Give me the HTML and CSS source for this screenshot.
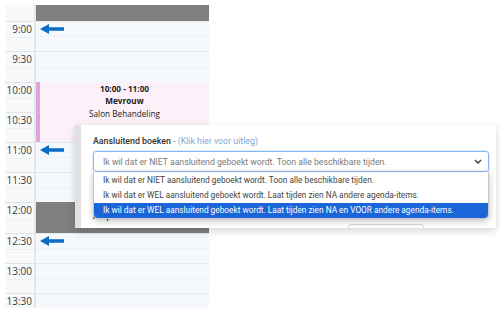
FILE: index.html
```html
<!DOCTYPE html>
<html lang="nl">
<head>
    <meta charset="UTF-8">
    <title>Agenda - Aansluitend boeken</title>
    <link rel="stylesheet" href="styles.css">
</head>
<body>
    <div class="calendar">
        <!-- Time labels -->
        <div class="labels">
            <div class="corner"></div>
            <div class="half">9:00</div>
            <div class="half">9:30</div>
            <div class="half">10:00</div>
            <div class="half">10:30</div>
            <div class="half">11:00</div>
            <div class="half">11:30</div>
            <div class="half">12:00</div>
            <div class="half">12:30</div>
            <div class="half">13:00</div>
            <div class="half last">13:30</div>
        </div>

        <!-- Day column -->
        <div class="day">
            <div class="day-head"></div>
            <div class="slots">
                <div class="slot"></div><div class="slot"></div>
                <div class="slot"></div><div class="slot"></div>
                <div class="slot"></div><div class="slot"></div>
                <div class="slot"></div><div class="slot"></div>
                <div class="slot"></div><div class="slot"></div>
                <div class="slot"></div><div class="slot"></div>
                <div class="slot"></div><div class="slot"></div>
                <div class="slot"></div><div class="slot"></div>
                <div class="slot"></div><div class="slot"></div>
                <div class="slot"></div>

                <div class="event">
                    <b>10:00 - 11:00</b>
                    <b>Mevrouw</b>
                    <span>Salon Behandeling</span>
                </div>
                <div class="blocked"></div>

                <svg class="arrow at-900" width="24" height="10" viewBox="0 0 24 10"><polygon points="0,5 9,0 9,3.3 24,3.3 24,6.7 9,6.7 9,10" /></svg>
                <svg class="arrow at-1100" width="24" height="10" viewBox="0 0 24 10"><polygon points="0,5 9,0 9,3.3 24,3.3 24,6.7 9,6.7 9,10" /></svg>
                <svg class="arrow at-1230" width="24" height="10" viewBox="0 0 24 10"><polygon points="0,5 9,0 9,3.3 24,3.3 24,6.7 9,6.7 9,10" /></svg>
            </div>
        </div>
    </div>

    <!-- Popup with booking option -->
    <div class="popup">
        <div class="popup-inner">
            <div class="field-title">
                <strong>Aansluitend boeken</strong> <span class="dash">-</span> <span class="link">(Klik hier voor uitleg)</span>
            </div>
            <div class="select-wrap">
                <div class="select">
                    <span>Ik wil dat er NIET aansluitend geboekt wordt. Toon alle beschikbare tijden.</span>
                    <svg class="chevron" width="8" height="5" viewBox="0 0 8 5"><polyline points="1,1 4,4 7,1" /></svg>
                </div>
                <ul class="options">
                    <li>Ik wil dat er NIET aansluitend geboekt wordt. Toon alle beschikbare tijden.</li>
                    <li>Ik wil dat er WEL aansluitend geboekt wordt. Laat tijden zien NA andere agenda-items.</li>
                    <li class="active">Ik wil dat er WEL aansluitend geboekt wordt. Laat tijden zien NA en VOOR andere agenda-items.</li>
                </ul>
            </div>
            <div class="next-row">
                <strong>Afspraak annuleren door klanten</strong>
                <span class="ghost-btn"></span>
            </div>
        </div>
    </div>
</body>
</html>
```

FILE: styles.css
```css
body {
    margin: 0;
    background-color: #ffffff;
    font-family: "Open Sans", sans-serif;
    color: #333333;
}
.calendar {
    display: flex;
    margin: 5px 0 0 5px;
    height: 303px;
    overflow: hidden;
}
.labels {
    width: 29px;
    background-color: #f8f9fa;
    border-right: 2px solid #e4e6e8;
}
.corner {
    height: 16.3px;
}
.half {
    height: 30.2px;
    box-sizing: border-box;
    border-top: 1px solid #e2e4e6;
    font-size: 10px;
    line-height: 14px;
    text-align: right;
    padding-right: 2px;
    color: #3a3a3a;
    background-image: linear-gradient(#eceef0, #eceef0);
    background-size: 100% 1px;
    background-position: 0 15.1px;
    background-repeat: no-repeat;
}
.day {
    width: 173px;
}
.day-head {
    height: 16.3px;
    background-color: #7f7f7f;
}
.slots {
    position: relative;
    background-color: #f5f9fe;
}
.slot {
    height: 15.1px;
    box-sizing: border-box;
    border-top: 1px solid #e6e9ee;
}
.slot:nth-child(even) {
    border-top-color: #eef1f5;
}
.event {
    position: absolute;
    left: 0;
    right: 0;
    top: 60.4px;
    height: 60.4px;
    background-color: #fcf1f9;
    border-left: 4px solid #e2a2dc;
    display: flex;
    flex-direction: column;
    align-items: center;
    padding-top: 1px;
    box-sizing: border-box;
    font-size: 8.2px;
    line-height: 12.6px;
    color: #222222;
}
.blocked {
    position: absolute;
    left: 0;
    right: 0;
    top: 181.2px;
    height: 30.2px;
    background-color: #7f7f7f;
}
.arrow {
    position: absolute;
    left: 4px;
    fill: #0a6cc4;
}
.at-900 { top: 3px; }
.at-1100 { top: 124px; }
.at-1230 { top: 215px; }

.popup {
    position: absolute;
    left: 75px;
    top: 125px;
    width: 415px;
    height: 103px;
    background-color: #ffffff;
    border-left: 6px solid #e0e0e0;
    box-shadow: 0 3px 8px rgba(0, 0, 0, 0.16);
    overflow: hidden;
    font-family: Roboto, "Noto Sans", sans-serif;
}
.popup-inner {
    padding: 10px 7px 0 12px;
}
.field-title {
    font-size: 8.8px;
    line-height: 12px;
    color: #333333;
}
.field-title strong {
    font-weight: 500;
}
.dash {
    color: #777777;
}
.link {
    color: #7ba8dc;
}
.select-wrap {
    position: relative;
    margin-top: 4px;
}
.select {
    display: flex;
    align-items: center;
    justify-content: space-between;
    height: 21px;
    box-sizing: border-box;
    border: 1px solid #86b7f0;
    border-radius: 3px;
    padding: 0 6px 0 9px;
    font-size: 8.7px;
    color: #7a7a7a;
    box-shadow: 0 0 0 1px rgba(134, 183, 240, 0.25);
}
.chevron {
    fill: none;
    stroke: #444444;
    stroke-width: 1.5;
}
.options {
    position: absolute;
    left: 0;
    right: 0;
    top: 21px;
    margin: 0;
    padding: 1px 0 0 0;
    list-style: none;
    background-color: #ffffff;
    border: 1px solid #c8c8c8;
    border-top: none;
    border-radius: 0 0 5px 5px;
    box-shadow: 0 2px 6px rgba(0, 0, 0, 0.25);
    overflow: hidden;
    z-index: 2;
}
.options li {
    height: 15px;
    line-height: 15px;
    padding-left: 9px;
    font-size: 8.3px;
    color: #444444;
    white-space: nowrap;
}
.options li.active {
    background-color: #1a66d8;
    color: #ffffff;
}
.next-row {
    display: flex;
    align-items: flex-start;
    margin-top: 38px;
    font-size: 8.8px;
    line-height: 12px;
    color: #333333;
}
.next-row strong {
    font-weight: 500;
}
.ghost-btn {
    margin: 14px 65px 0 auto;
    width: 74px;
    height: 20px;
    border: 1px solid #d6d6d6;
    border-radius: 3px;
}
```
